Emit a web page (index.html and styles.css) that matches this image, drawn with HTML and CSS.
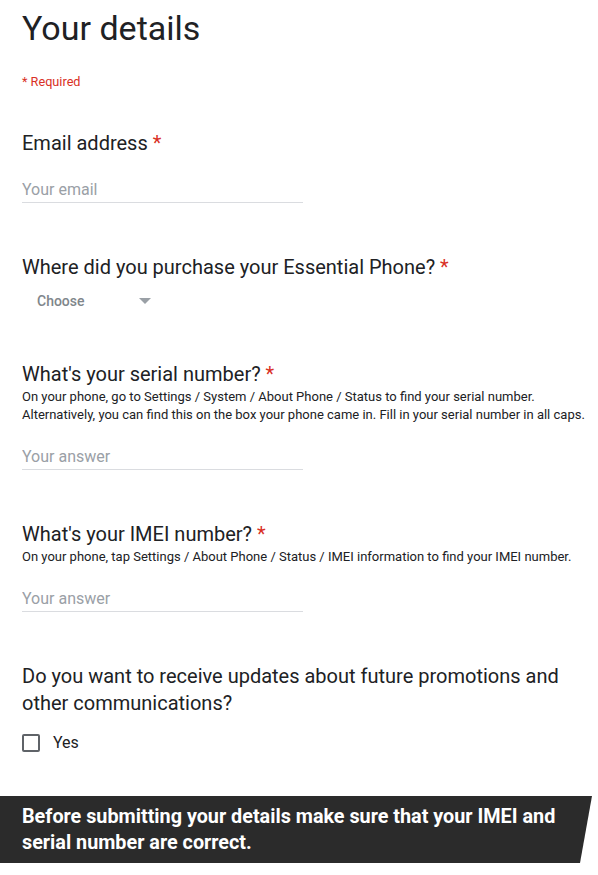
FILE: index.html
```html
<!DOCTYPE html>
<html lang="en">
<head>
    <meta charset="UTF-8">
    <meta name="viewport" content="width=device-width, initial-scale=1.0">
    <title>Your details</title>
    <link rel="stylesheet" href="styles.css">
</head>
<body>
    <div id="form">
        <h1 class="title">Your details</h1>
        <p class="required-note">* Required</p>

        <div class="question first">
            <label class="question-title" for="email">Email address <span class="star">*</span></label>
            <input class="answer" type="email" id="email" placeholder="Your email">
        </div>

        <div class="question">
            <p class="question-title">Where did you purchase your Essential Phone? <span class="star">*</span></p>
            <div class="select">
                <span class="select-text">Choose</span>
                <span class="select-arrow"></span>
            </div>
        </div>

        <div class="question">
            <label class="question-title" for="serial">What's your serial number? <span class="star">*</span></label>
            <p class="question-help">On your phone, go to Settings / System / About Phone / Status to find your serial number.<br>Alternatively, you can find this on the box your phone came in. Fill in your serial number in all caps.</p>
            <input class="answer" type="text" id="serial" placeholder="Your answer">
        </div>

        <div class="question">
            <label class="question-title" for="imei">What's your IMEI number? <span class="star">*</span></label>
            <p class="question-help">On your phone, tap Settings / About Phone / Status / IMEI information to find your IMEI number.</p>
            <input class="answer" type="text" id="imei" placeholder="Your answer">
        </div>

        <div class="question">
            <p class="question-title">Do you want to receive updates about future promotions and other communications?</p>
            <label class="check-row">
                <span class="checkbox"></span>
                <span>Yes</span>
            </label>
        </div>
    </div>

    <div class="notice">
        <p>Before submitting your details make sure that your IMEI and serial number are correct.</p>
    </div>
</body>
</html>
```

FILE: styles.css
```css
body {
    margin: 0;
    font-family: Roboto, "Noto Sans", Arial, sans-serif;
    color: #202124;
    background-color: #ffffff;
}

#form {
    padding: 0 8px 0 22px;
}

.title {
    margin: 0;
    padding-top: 8px;
    font-size: 34px;
    font-weight: 400;
    line-height: 40px;
}

.required-note {
    margin: 26px 0 0;
    font-size: 12.7px;
    line-height: 16px;
    color: #d93025;
}

.question {
    margin-top: 51px;
}

.question.first {
    margin-top: 40px;
}

.question-title {
    display: block;
    margin: 0;
    font-size: 20px;
    line-height: 27px;
    color: #202124;
    max-width: 550px;
}

.star {
    color: #d93025;
}

.question-help {
    margin: 0;
    font-size: 13px;
    line-height: 18px;
    color: #202124;
}

.answer {
    display: block;
    width: 281px;
    margin-top: 19px;
    padding: 4px 0 2px;
    border: none;
    border-bottom: 1px solid #dadce0;
    font-family: inherit;
    font-size: 16px;
    line-height: 20px;
    color: #202124;
    outline: none;
}

.answer::placeholder {
    color: #9aa0a6;
}

.select {
    display: flex;
    align-items: center;
    width: 114px;
    height: 18px;
    margin-top: 11px;
    padding-left: 15px;
}

.select-text {
    flex: 1;
    font-size: 14px;
    font-weight: 500;
    color: #80868b;
}

.select-arrow {
    width: 0;
    height: 0;
    border-left: 6px solid transparent;
    border-right: 6px solid transparent;
    border-top: 6px solid #9aa0a6;
}

.check-row {
    display: flex;
    align-items: center;
    gap: 13px;
    margin-top: 16px;
    font-size: 16px;
    color: #202124;
}

.checkbox {
    width: 14px;
    height: 14px;
    border: 2px solid #5f6368;
    border-radius: 2px;
}

.notice {
    margin-top: 44px;
    width: 592px;
    background-color: #2b2b2b;
    clip-path: polygon(0 0, 100% 0, 580px 100%, 0 100%);
}

.notice p {
    margin: 0;
    padding: 8px 20px 7px 22px;
    font-size: 19.8px;
    font-weight: 700;
    line-height: 26px;
    color: #ffffff;
}
```
